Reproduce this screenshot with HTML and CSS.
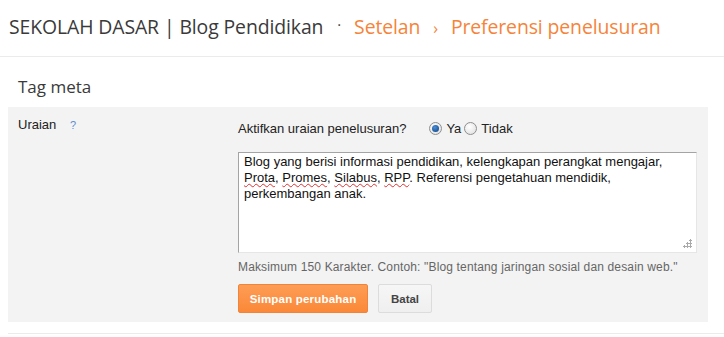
FILE: index.html
```html
<!DOCTYPE html>
<html lang="id">
<head>
<meta charset="utf-8">
<title>Preferensi penelusuran</title>
<link rel="stylesheet" href="styles.css">
</head>
<body>
<header class="top">
  <span class="blog">SEKOLAH DASAR | Blog Pendidikan</span>
  <span class="dot">·</span>
  <span class="crumb">Setelan</span>
  <span class="chev">›</span>
  <span class="crumb">Preferensi penelusuran</span>
</header>
<h2 class="section-title">Tag meta</h2>
<div class="panel">
  <div class="label">Uraian <span class="help">?</span></div>
  <div class="field">
    <div class="question">
      <span class="qtext">Aktifkan uraian penelusuran?</span>
      <span class="radio on"></span><span class="rlabel">Ya</span>
      <span class="radio"></span><span class="rlabel">Tidak</span>
    </div>
    <div class="textarea">Blog yang berisi informasi pendidikan, kelengkapan perangkat mengajar, <span class="sp">Prota</span>, <span class="sp">Promes</span>, <span class="sp">Silabus</span>, <span class="sp">RPP</span>. Referensi pengetahuan mendidik, perkembangan anak.<span class="grip"></span></div>
    <div class="hint">Maksimum 150 Karakter. Contoh: "Blog tentang jaringan sosial dan desain web."</div>
    <div class="buttons">
      <button class="btn primary">Simpan perubahan</button>
      <button class="btn">Batal</button>
    </div>
  </div>
</div>
<div class="bottom-line"></div>
</body>
</html>
```
FILE: styles.css
```css
html, body { margin: 0; padding: 0; background: #fff; }
body { font-family: "Liberation Sans", Arial, sans-serif; font-size: 13px; color: #222; }

.top {
  height: 56px;
  border-bottom: 1px solid #ebebeb;
  padding-left: 9px;
  font-family: "Open Sans", sans-serif;
  font-size: 19.4px;
  line-height: 54px;
  white-space: nowrap;
  color: #3a3a3a;
  letter-spacing: -0.1px;
}
.top .dot { margin: 0 8px 0 9px; color: #444; font-size: 15px; position: relative; top: -4px; }
.top .crumb { color: #f5843a; }
.top .chev { color: #f5843a; margin: 0 8px; font-size: 16px; }

.section-title {
  margin: 0;
  padding: 18px 0 0 18px;
  height: 32px;
  font-family: "Open Sans", sans-serif;
  font-weight: normal;
  font-size: 17px;
  line-height: 24px;
  color: #3a3a3a;
}

.panel {
  margin-left: 8px;
  width: 700px;
  background: #f3f3f3;
  display: grid;
  grid-template-columns: 220px 1fr;
  padding: 10px 0 9px 10px;
  box-sizing: border-box;
}
.label { line-height: 16px; color: #222; }
.help { color: #5b8dd6; font-size: 11px; margin-left: 10px; }

.field { padding-top: 3px; }
.question { display: flex; align-items: center; height: 16px; }
.qtext { margin-right: 23px; }
.radio {
  width: 11px; height: 11px;
  border-radius: 50%;
  border: 1px solid #8f8f8f;
  background: radial-gradient(circle at 40% 35%, #fff, #dcdcdc);
  box-sizing: content-box;
  position: relative;
  margin-right: 4px;
}
.radio.on::after {
  content: "";
  position: absolute;
  left: 2px; top: 2px;
  width: 7px; height: 7px;
  border-radius: 50%;
  background: radial-gradient(circle at 40% 35%, #4a8fd8, #0d3f7d);
}
.rlabel { margin-right: 3px; }

.textarea {
  margin-top: 16px;
  width: 459px;
  height: 101px;
  box-sizing: border-box;
  background: #fff;
  border: 1px solid #a4a4a4;
  border-right-color: #e6e6e6;
  border-bottom-color: #e6e6e6;
  padding: 1px 5px;
  line-height: 16px;
  color: #111;
  position: relative;
}
.sp { text-decoration: underline wavy #e03030; text-decoration-thickness: 1px; text-underline-offset: 1px; }
.grip {
  position: absolute; right: 4px; bottom: 4px;
  width: 9px; height: 9px;
  background:
    radial-gradient(circle, #aaa 1px, transparent 1.2px) 6px 0 / 3px 3px no-repeat,
    radial-gradient(circle, #aaa 1px, transparent 1.2px) 3px 3px / 3px 3px no-repeat,
    radial-gradient(circle, #aaa 1px, transparent 1.2px) 6px 3px / 3px 3px no-repeat,
    radial-gradient(circle, #aaa 1px, transparent 1.2px) 0 6px / 3px 3px no-repeat,
    radial-gradient(circle, #aaa 1px, transparent 1.2px) 3px 6px / 3px 3px no-repeat,
    radial-gradient(circle, #aaa 1px, transparent 1.2px) 6px 6px / 3px 3px no-repeat;
}

.hint { margin-top: 7px; font-size: 12px; line-height: 15px; color: #666; letter-spacing: 0.15px; }

.buttons { margin-top: 9px; display: flex; gap: 10px; }
.btn {
  height: 29px;
  box-sizing: border-box;
  padding: 0;
  font-family: "Liberation Sans", Arial, sans-serif;
  font-size: 11.5px;
  font-weight: bold;
  border-radius: 2px;
  border: 1px solid #dcdcdc;
  background: linear-gradient(#f6f6f6, #efefef);
  color: #444;
  width: 54px;
}
.btn.primary {
  width: 130px;
  border-color: #f0843a;
  background: linear-gradient(#fd9d55, #fb8838);
  color: #fff;
  letter-spacing: 0.2px;
}

.bottom-line { margin: 11px 0 0 8px; border-top: 1px solid #ebebeb; }
```
